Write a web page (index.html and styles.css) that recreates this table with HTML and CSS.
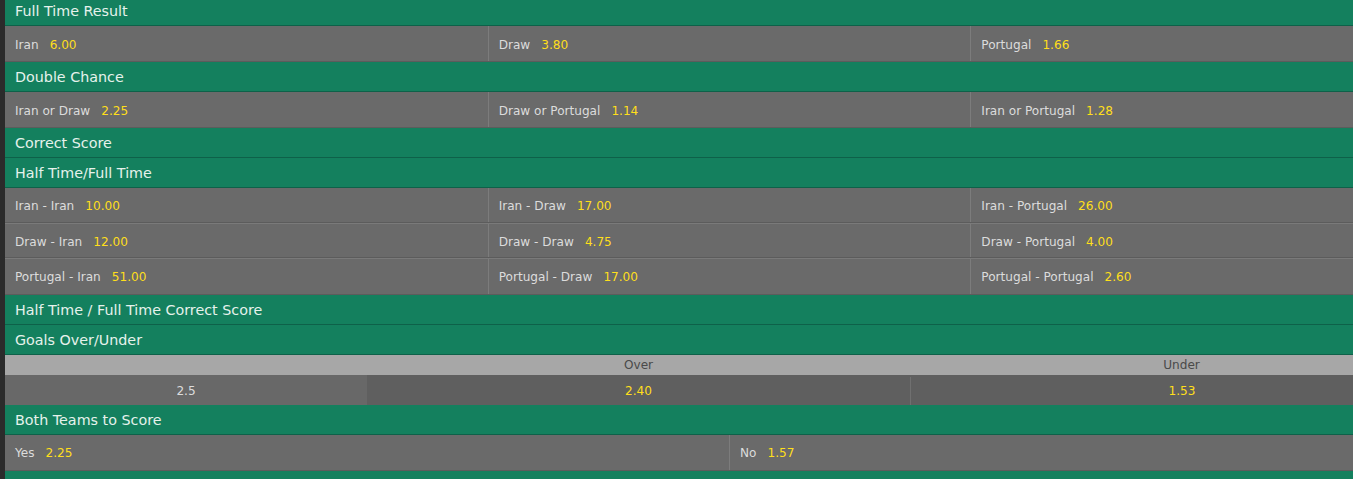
FILE: index.html
```html
<!DOCTYPE html>
<html lang="en">
<head>
    <meta charset="UTF-8">
    <title>Iran v Portugal - Markets</title>
    <link rel="stylesheet" href="styles.css">
</head>
<body>
<div class="markets">

    <div class="market">
        <div class="market-header">Full Time Result</div>
        <div class="row cols-3">
            <div class="cell"><span class="name">Iran</span><span class="odds">6.00</span></div>
            <div class="cell"><span class="name">Draw</span><span class="odds">3.80</span></div>
            <div class="cell"><span class="name">Portugal</span><span class="odds">1.66</span></div>
        </div>
    </div>

    <div class="market">
        <div class="market-header">Double Chance</div>
        <div class="row cols-3">
            <div class="cell"><span class="name">Iran or Draw</span><span class="odds">2.25</span></div>
            <div class="cell"><span class="name">Draw or Portugal</span><span class="odds">1.14</span></div>
            <div class="cell"><span class="name">Iran or Portugal</span><span class="odds">1.28</span></div>
        </div>
    </div>

    <div class="market">
        <div class="market-header">Correct Score</div>
    </div>

    <div class="market multi">
        <div class="market-header">Half Time/Full Time</div>
        <div class="row cols-3">
            <div class="cell"><span class="name">Iran - Iran</span><span class="odds">10.00</span></div>
            <div class="cell"><span class="name">Iran - Draw</span><span class="odds">17.00</span></div>
            <div class="cell"><span class="name">Iran - Portugal</span><span class="odds">26.00</span></div>
        </div>
        <div class="row cols-3">
            <div class="cell"><span class="name">Draw - Iran</span><span class="odds">12.00</span></div>
            <div class="cell"><span class="name">Draw - Draw</span><span class="odds">4.75</span></div>
            <div class="cell"><span class="name">Draw - Portugal</span><span class="odds">4.00</span></div>
        </div>
        <div class="row cols-3">
            <div class="cell"><span class="name">Portugal - Iran</span><span class="odds">51.00</span></div>
            <div class="cell"><span class="name">Portugal - Draw</span><span class="odds">17.00</span></div>
            <div class="cell"><span class="name">Portugal - Portugal</span><span class="odds">2.60</span></div>
        </div>
    </div>

    <div class="market">
        <div class="market-header">Half Time / Full Time Correct Score</div>
    </div>

    <div class="market">
        <div class="market-header">Goals Over/Under</div>
        <div class="ou-head">
            <div></div>
            <div>Over</div>
            <div>Under</div>
        </div>
        <div class="ou-row">
            <div class="line">2.5</div>
            <div class="odds">2.40</div>
            <div class="odds">1.53</div>
        </div>
    </div>

    <div class="market btts">
        <div class="market-header">Both Teams to Score</div>
        <div class="row cols-2">
            <div class="cell"><span class="name">Yes</span><span class="odds">2.25</span></div>
            <div class="cell"><span class="name">No</span><span class="odds">1.57</span></div>
        </div>
    </div>

    <div class="market">
        <div class="market-header">&nbsp;</div>
    </div>

</div>
</body>
</html>
```

FILE: styles.css
```css
html, body {
    margin: 0;
    padding: 0;
    overflow: hidden;
}
body {
    background-color: #2b2b2b;
    font-family: "DejaVu Sans", Verdana, sans-serif;
    color: #dcdcdc;
}
.markets {
    width: 1448px;
    margin: -4px 0 0 5px;
}
.market-header {
    height: 28px;
    line-height: 28px;
    padding: 1px 0 0 10px;
    background-color: #14805e;
    border-bottom: 1px solid #0e6149;
    color: #e6f2ec;
    font-size: 14.3px;
}
.row {
    display: grid;
    height: 35px;
    background-color: #6a6a6a;
    border-bottom: 1px solid #5c5c5c;
}
.multi .row {
    height: 34px;
}
.cols-3 {
    grid-template-columns: 1fr 1fr 1fr;
}
.cols-2 {
    grid-template-columns: 1fr 1fr;
}
.cell {
    display: flex;
    align-items: center;
    padding: 2px 0 0 10px;
    font-size: 12.1px;
}
.btts .cell {
    padding-top: 1px;
}
.cell + .cell {
    border-left: 1px solid #7c7c7c;
}
.row + .row {
    border-top: 1px solid #7a7a7a;
    height: 33px;
}
.multi .row:last-child {
    height: 35px;
}
.multi .row:last-child .cell {
    padding-top: 1px;
}
.name {
    margin-right: 11px;
}
.odds {
    color: #ffdf1b;
}
.ou-head {
    display: grid;
    grid-template-columns: 1fr 1.5fr 1.5fr;
    height: 20px;
    line-height: 20px;
    background-color: #a7a7a7;
    color: #4a4a4a;
    font-size: 12.1px;
    text-align: center;
}
.ou-row {
    display: grid;
    grid-template-columns: 1fr 1.5fr 1.5fr;
    height: 28px;
    line-height: 28px;
    padding-top: 2px;
    background-color: #5f5f5f;
    font-size: 12.1px;
    text-align: center;
}
.ou-row .line {
    background-color: #686868;
    margin-top: -2px;
    padding-top: 2px;
}
.ou-row .odds + .odds {
    border-left: 1px solid #707070;
}
```
